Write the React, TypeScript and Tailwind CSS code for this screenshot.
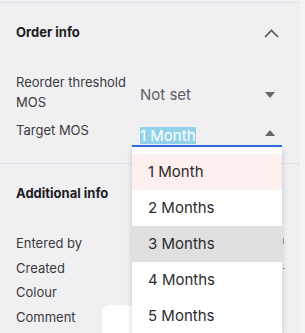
function Caret({ up }: { up?: boolean }) {
  return (
    <svg width="10" height="6" viewBox="0 0 10 6" className="shrink-0">
      {up ? <path d="M0 6 L5 0 L10 6 Z" fill="#666" /> : <path d="M0 0 L10 0 L5 6 Z" fill="#666" />}
    </svg>
  );
}

function SectionHeader({ title, chevron }: { title: string; chevron?: boolean }) {
  return (
    <div className="flex h-[60px] items-center justify-between pl-4 pr-[21px]">
      <p className="text-[13px] font-bold text-[#1c1c1e]">{title}</p>
      {chevron && (
        <svg width="15" height="9" viewBox="0 0 15 9" fill="none">
          <path d="M1 8 L7.5 1.5 L14 8" stroke="#555" strokeWidth="1.6" />
        </svg>
      )}
    </div>
  );
}

const months = ["1 Month", "2 Months", "3 Months", "4 Months", "5 Months"];

export default function App() {
  return (
    <div className="relative flex h-[333px] w-[305px] overflow-hidden bg-[#f0f0f3] font-['Inter',sans-serif] text-[#3a3a3c]">
      <div className="w-[300px] shrink-0">
        <div className="h-[2px]" />
        <div className="border-t border-[#e2e2e6]">
          <SectionHeader title="Order info" chevron />
          <div className="mt-[9px] flex flex-col pb-[16px]">
            <div className="flex items-center">
              <p className="w-[132px] whitespace-nowrap pl-4 text-[13px] leading-[20px]">
                Reorder threshold
                <br />
                MOS
              </p>
              <div className="mt-[6px] flex w-[150px] items-center justify-between pl-2 pr-[7px]">
                <span className="text-[15px] text-[#5c5c66]">Not set</span>
                <Caret />
              </div>
            </div>
            <div className="mt-[8px] flex items-start">
              <p className="w-[132px] pl-4 text-[13px] leading-[20px]">Target MOS</p>
              <div className="flex h-[27px] w-[150px] items-center justify-between border-b-2 border-[#2f6fe0] pl-2 pr-[7px]">
                <span className="mt-[5px] bg-[#93d2ea] text-[15px] leading-[17px] text-white">1 Month</span>
                <Caret up />
              </div>
            </div>
          </div>
        </div>
        <div className="border-t border-[#e2e2e6]">
          <SectionHeader title="Additional info" />
          <div className="flex flex-col gap-[4.5px] pt-[9px]">
            <p className="pl-4 text-[13px] leading-[20px]">Entered by</p>
            <p className="pl-4 text-[13px] leading-[20px]">Created</p>
            <p className="pl-4 text-[13px] leading-[20px]">Colour</p>
            <div className="flex items-start">
              <p className="w-[102px] pl-4 text-[13px] leading-[20px]">Comment</p>
              <div className="mt-[-2px] h-[40px] w-[178px] rounded-lg bg-white" />
            </div>
          </div>
        </div>
      </div>
      <div className="flex-1 bg-[#f5f5f7]" />
      <div className="absolute left-[283px] top-[238px] h-[6px] w-px bg-[#9a9aa2]" />
      <div className="absolute left-[283px] top-[268px] h-px w-[2px] bg-[#9a9aa2]" />
      <div className="absolute left-[132px] top-[147px] w-[150px] bg-white pt-[7px] shadow-[0_2px_6px_rgba(0,0,0,0.18)]">
        {months.map((m, i) => (
          <div
            key={m}
            className={`flex h-[36px] items-center pl-4 text-[15px] text-[#2c2c2e] ${i === 0 ? "bg-[#fdefed]" : i === 2 ? "bg-[#e0e0e0]" : "bg-white"}`}
          >
            {m}
          </div>
        ))}
      </div>
    </div>
  );
}
